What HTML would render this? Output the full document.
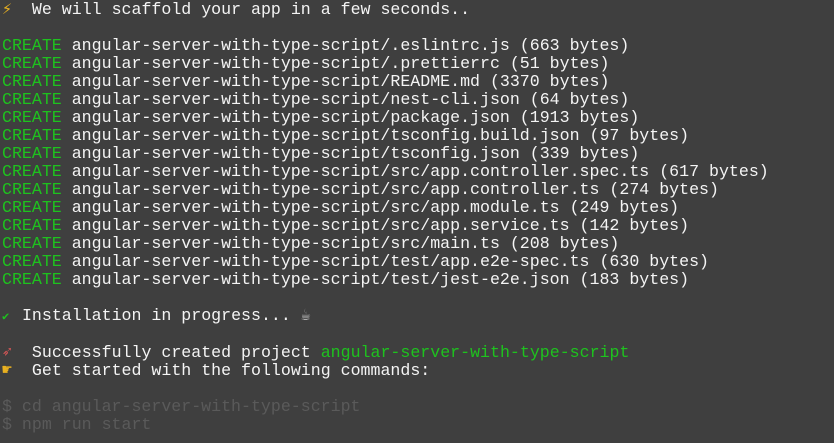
<!DOCTYPE html>
<html><head><meta charset="utf-8"><style>
html,body{margin:0;padding:0;background:#3f3f3f;width:834px;height:443px;overflow:hidden}
pre{margin:0;padding:1px 0 0 2px;font-family:"Liberation Mono","DejaVu Sans Mono",monospace;font-size:16.6px;line-height:18px;color:#f4f4f4;white-space:pre}
.g{color:#1ec21e}.d{color:#5a5a5a}.y{color:#e8b020}.ck{color:#1ec21e;font-size:12px;display:inline-block;width:10px}
</style></head><body><pre><span class="y">⚡</span>  We will scaffold your app in a few seconds..

<span class="g">CREATE</span> angular-server-with-type-script/.eslintrc.js (663 bytes)
<span class="g">CREATE</span> angular-server-with-type-script/.prettierrc (51 bytes)
<span class="g">CREATE</span> angular-server-with-type-script/README.md (3370 bytes)
<span class="g">CREATE</span> angular-server-with-type-script/nest-cli.json (64 bytes)
<span class="g">CREATE</span> angular-server-with-type-script/package.json (1913 bytes)
<span class="g">CREATE</span> angular-server-with-type-script/tsconfig.build.json (97 bytes)
<span class="g">CREATE</span> angular-server-with-type-script/tsconfig.json (339 bytes)
<span class="g">CREATE</span> angular-server-with-type-script/src/app.controller.spec.ts (617 bytes)
<span class="g">CREATE</span> angular-server-with-type-script/src/app.controller.ts (274 bytes)
<span class="g">CREATE</span> angular-server-with-type-script/src/app.module.ts (249 bytes)
<span class="g">CREATE</span> angular-server-with-type-script/src/app.service.ts (142 bytes)
<span class="g">CREATE</span> angular-server-with-type-script/src/main.ts (208 bytes)
<span class="g">CREATE</span> angular-server-with-type-script/test/app.e2e-spec.ts (630 bytes)
<span class="g">CREATE</span> angular-server-with-type-script/test/jest-e2e.json (183 bytes)

<span class="ck">✔</span> Installation in progress... <span style="color:#bbb">☕</span>

<span style="color:#c55">➶</span>  Successfully created project <span class="g">angular-server-with-type-script</span>
<span class="y">☛</span>  Get started with the following commands:

<span class="d">$ cd angular-server-with-type-script</span>
<span class="d">$ npm run start</span>
</pre></body></html>
